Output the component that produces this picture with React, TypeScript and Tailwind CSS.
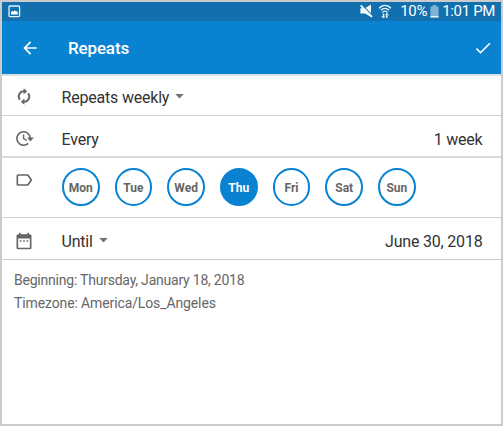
import type { ReactNode } from "react";
import { MdArrowBack, MdCheck, MdDateRange, MdLabelOutline } from "react-icons/md";

const days = ["Mon", "Tue", "Wed", "Thu", "Fri", "Sat", "Sun"];
const selected = ["Thu"];

function PictureIcon() {
    return (
        <svg width="13" height="13" viewBox="0 0 13 13" fill="none">
            <rect x="1" y="1" width="10.6" height="10.6" rx="1" stroke="#e3f1fa" strokeWidth="1.3" />
            <path d="M3 9.4V7.2L4.4 5.8L5.4 6.8L6.9 5.2L8 6.6L8.8 6L9.8 7.4V9.4Z" fill="#fff" />
        </svg>
    );
}

function MuteIcon() {
    return (
        <svg className="mt-[-1px]" width="13" height="14" viewBox="0 0 13 14">
            <path d="M0.4 4.2H5L11 0.4V13L5 9.4H0.4Z" fill="#f3f9fd" />
            <path d="M1.6 0.6L13 12" stroke="#1170ad" strokeWidth="1.2" />
            <path d="M0.6 1.4L12 12.8" stroke="#f3f9fd" strokeWidth="1.8" />
        </svg>
    );
}

function WifiIcon() {
    return (
        <svg className="mt-[-1px]" width="14" height="15" viewBox="0 0 14 15" fill="none" stroke="#e3f1fa">
            <path d="M1.2 4.2C4.2 0.4 9.8 0.4 12.8 4.2" strokeWidth="1.4" />
            <path d="M2.9 6.4C5 3.6 9 3.6 11.1 6.4" strokeWidth="1.3" />
            <path d="M4.5 8.5C5.8 6.7 8.2 6.7 9.5 8.5" strokeWidth="1.3" />
            <path d="M5.5 9.6V14M8.8 9.6V14" strokeWidth="1.5" />
            <path d="M3.8 12L5.5 14L6.8 12.4M7.5 11.2L8.8 9.4L10.5 11.4" strokeWidth="1" />
        </svg>
    );
}

function BatteryIcon() {
    return (
        <svg width="9" height="13" viewBox="0 0 9 13">
            <path d="M2.6 0H6.4V1.4H8.6V11H0.4V1.4H2.6Z" fill="#7fb3d5" />
            <path d="M0.4 11H8.6V12.6H0.4Z" fill="#e3f1fa" />
        </svg>
    );
}

function RepeatIcon() {
    return (
        <svg width="14" height="17" viewBox="0 0 14 17" fill="none" stroke="#666" strokeWidth="2">
            <path d="M7.4 3.3A5.2 5.2 0 0 0 2.9 11.7" />
            <path d="M6.6 13.7A5.2 5.2 0 0 0 11.1 5.3" />
            <path d="M6.6 0.2L10.2 3.3L6.6 6.5Z" fill="#666" stroke="none" />
            <path d="M7.4 16.8L3.8 13.7L7.4 10.5Z" fill="#666" stroke="none" />
        </svg>
    );
}

function IntervalIcon() {
    return (
        <svg className="ml-[2px]" width="18" height="17" viewBox="0 0 18 17" fill="none" stroke="#666">
            <path d="M12.2 13.4A6.7 6.7 0 1 1 14.3 8.2" strokeWidth="1.6" />
            <path d="M7.6 4.4V8.7L10.8 10.5" strokeWidth="1.4" />
            <path d="M11 7.6H17.8L14.4 11.6Z" fill="#666" stroke="none" />
        </svg>
    );
}

function Caret() {
    return (
        <svg className="ml-[6px]" width="9" height="5" viewBox="0 0 9 5">
            <path d="M0.3 0H8.7L4.5 4.6Z" fill="#707070" />
        </svg>
    );
}

function Row({ icon, label, caret, value }: { icon: ReactNode; label: string; caret?: boolean; value?: string }) {
    return (
        <div className="flex h-full items-center pr-[18.5px] text-base tracking-[-0.2px] text-[#333]">
            <div className="flex w-11 shrink-0 justify-center text-[#666]">{icon}</div>
            <span className="ml-[15.5px] pt-[3px]">{label}</span>
            {caret && <Caret />}
            {value && <span className="ml-auto pt-[3px]">{value}</span>}
        </div>
    );
}

export default function App() {
    return (
        <div className="flex h-[426px] w-[503px] flex-col overflow-hidden border-2 border-[#cbcbcb] bg-white font-['Roboto',sans-serif]">
            <div className="flex h-[19px] shrink-0 items-center bg-[#1170ad] pl-[6px] text-white">
                <PictureIcon />
                <div className="ml-auto flex items-center pr-[6px] text-[15px] leading-none tracking-[-0.25px]">
                    <MuteIcon />
                    <span className="w-[5px]" />
                    <WifiIcon />
                    <span className="ml-[8px]">10%</span>
                    <span className="w-[3px]" />
                    <BatteryIcon />
                    <span className="ml-[3px] tracking-[-0.35px]">1:01 PM</span>
                </div>
            </div>

            <header className="flex h-[53px] shrink-0 items-center bg-[#0a82d2] pr-[8px] pl-[18px] text-white">
                <MdArrowBack size={20} />
                <h1 className="ml-[28px] pt-[2px] text-[17px] font-medium tracking-[-0.15px]">Repeats</h1>
                <MdCheck className="ml-auto" size={20} />
            </header>

            <div className="h-[42px] shrink-0 border-t-2 border-b border-t-[#dadfe2] border-b-[#d2d2d2] pt-px">
                <Row icon={<RepeatIcon />} label="Repeats weekly" caret />
            </div>
            <div className="h-[42px] shrink-0 border-b-2 border-[#dadada] pt-[5px]">
                <Row icon={<IntervalIcon />} label="Every" value="1 week" />
            </div>

            <div className="flex h-[60px] shrink-0 border-b border-[#d2d2d2]">
                <div className="flex w-11 shrink-0 justify-center pt-[12px] text-[#666]">
                    <MdLabelOutline size={20} />
                </div>
                <div className="ml-[16px] flex items-center gap-[15.2px] pb-[1px]">
                    {days.map((day) => (
                        <div
                            key={day}
                            className={`flex size-[37.5px] items-center justify-center rounded-full border-2 border-[#0a82d2] pt-px text-[12px] font-bold ${
                                selected.includes(day) ? "bg-[#0a82d2] text-white" : "text-[#666]"
                            }`}
                        >
                            {day}
                        </div>
                    ))}
                </div>
            </div>

            <div className="h-[42px] shrink-0 border-b border-[#cecece] pt-[4px]">
                <Row icon={<MdDateRange size={20} />} label="Until" caret value="June 30, 2018" />
            </div>

            <div className="px-[12px] pt-[9px] text-sm leading-[23px] text-[#666]">
                <p className="tracking-[-0.22px]">Beginning: Thursday, January 18, 2018</p>
                <p className="tracking-[-0.12px]">Timezone: America/Los_Angeles</p>
            </div>
        </div>
    );
}
